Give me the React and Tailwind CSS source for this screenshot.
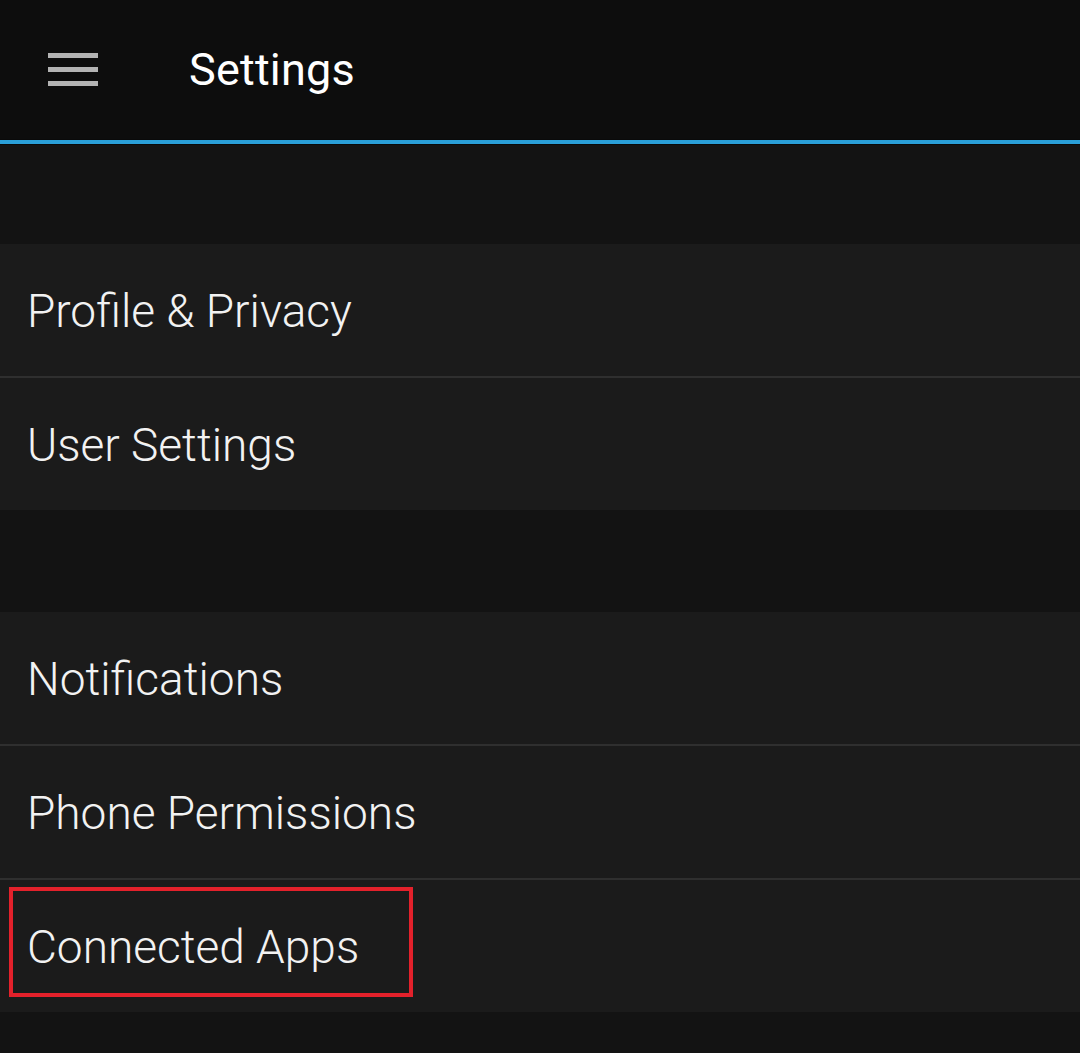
import React from "react";

const Row = ({ label, divider, children }) => (
  <div className={`relative bg-[#1b1b1b] flex items-center pl-[27px] ${divider ? "border-b-2 border-[#2f2f2f] h-[134px]" : "h-[132px]"}`}>
    <span className="text-[46px] font-light text-[#f2f2f2] leading-none pt-[2px]">{label}</span>
    {children}
  </div>
);

export default function App() {
  return (
    <div className="w-[1080px] h-[1053px] bg-[#131313] overflow-hidden" style={{ fontFamily: "Roboto, 'Noto Sans', sans-serif" }}>
      <div className="h-[139px] bg-[#0d0d0d] flex items-center">
        <div className="ml-[48px] w-[50px] flex flex-col gap-[9px]">
          <div className="h-[5px] bg-[#b3b3b3]" />
          <div className="h-[5px] bg-[#b3b3b3]" />
          <div className="h-[5px] bg-[#b3b3b3]" />
        </div>
        <span className="ml-[91px] text-[45px] text-white leading-none tracking-[0.2px]">Settings</span>
      </div>
      <div className="h-[6px] bg-[#0a0a0a] flex flex-col justify-center">
        <div className="h-[4px] bg-[#2a9fd8]" />
      </div>
      <div className="h-[99px]" />
      <Row label="Profile & Privacy" divider />
      <Row label="User Settings" />
      <div className="h-[102px]" />
      <Row label="Notifications" divider />
      <Row label="Phone Permissions" divider />
      <Row label="Connected Apps">
        <div className="absolute left-[9px] top-[7px] w-[404px] h-[110px] border-4 border-[#e3212b]" />
      </Row>
    </div>
  );
}
